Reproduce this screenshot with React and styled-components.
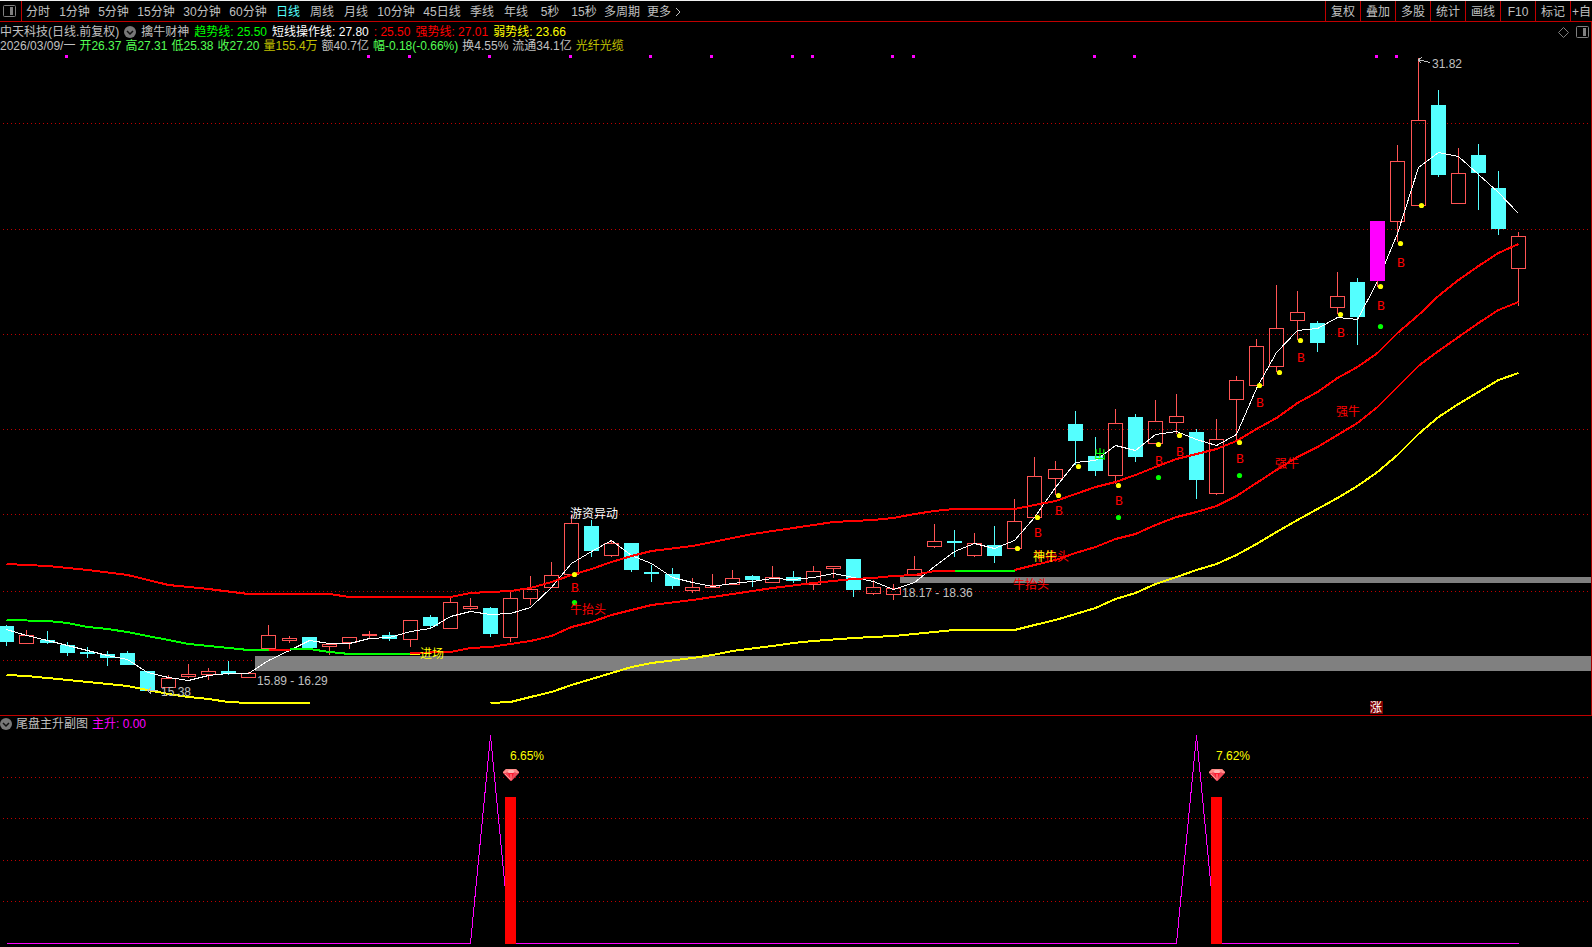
import React from 'react';
import styled, { createGlobalStyle } from 'styled-components';

const GlobalStyle = createGlobalStyle`
  body {
    margin: 0;
    background: #000;
    color: #c0c0c0;
    font: 12px/14px "Liberation Sans", "Noto Sans CJK SC", sans-serif;
  }
`

const periods = [
  '分时', '1分钟', '5分钟', '15分钟', '30分钟', '60分钟', '日线', '周线', '月线', '10分钟',
  '45日线', '季线', '年线', '5秒', '15秒', '多周期',
];

const tools = ['复权', '叠加', '多股', '统计', '画线', 'F10', '标记'];

// type, body top, body bottom, high, low
const candles = [
  ['d', 626, 642, 625, 646], ['u', 635, 644, 630, 644], ['d', 640, 643, 631, 644],
  ['d', 645, 653, 642, 656], ['d', 652, 654, 647, 658], ['d', 654, 658, 651, 666],
  ['d', 653, 665, 651, 665], ['d', 671, 691, 671, 691], ['u', 678, 688, 675, 688],
  ['u', 674, 677, 664, 678], ['u', 671, 675, 668, 680], ['d', 671, 674, 661, 675],
  ['u', 673, 678, 672, 678], ['u', 635, 649, 625, 649], ['u', 638, 641, 636, 643],
  ['d', 637, 648, 637, 648], ['u', 644, 647, 643, 655], ['u', 637, 643, 637, 649],
  ['u', 634, 636, 631, 638], ['d', 635, 639, 632, 641], ['u', 620, 640, 620, 647],
  ['d', 617, 626, 615, 628], ['u', 602, 629, 597, 629], ['u', 606, 609, 598, 610],
  ['d', 608, 634, 607, 637], ['u', 598, 638, 592, 642], ['u', 589, 599, 576, 605],
  ['u', 575, 588, 562, 588], ['u', 523, 575, 515, 575], ['d', 526, 551, 520, 557],
  ['u', 543, 556, 540, 557], ['d', 543, 570, 543, 572], ['d', 572, 574, 565, 582],
  ['d', 574, 586, 568, 589], ['u', 587, 591, 578, 593], ['u', 585, 588, 574, 588],
  ['u', 578, 585, 570, 585], ['d', 576, 580, 575, 587], ['u', 577, 583, 566, 583],
  ['d', 577, 581, 571, 583], ['u', 571, 585, 566, 590], ['u', 566, 569, 566, 578],
  ['d', 559, 590, 559, 597], ['u', 587, 594, 580, 595], ['u', 588, 595, 584, 600],
  ['u', 569, 576, 556, 576], ['u', 541, 547, 524, 548], ['d', 541, 543, 530, 557],
  ['u', 543, 556, 533, 557], ['d', 545, 556, 526, 563], ['u', 521, 549, 499, 549],
  ['u', 476, 518, 457, 518], ['u', 469, 479, 461, 495], ['d', 424, 441, 411, 465],
  ['d', 456, 471, 437, 476], ['u', 423, 476, 409, 484], ['d', 417, 457, 414, 462],
  ['u', 421, 444, 400, 444], ['u', 416, 423, 394, 434], ['d', 432, 480, 429, 499],
  ['u', 439, 494, 419, 495], ['u', 380, 400, 376, 441], ['u', 346, 386, 339, 386],
  ['u', 328, 367, 285, 372], ['u', 312, 321, 291, 340], ['d', 323, 343, 321, 352],
  ['u', 296, 308, 272, 314], ['d', 282, 317, 278, 345], ['m', 221, 281, 221, 287],
  ['u', 161, 222, 145, 242], ['u', 120, 206, 58, 206], ['d', 105, 175, 90, 177],
  ['u', 173, 204, 148, 204], ['d', 155, 173, 144, 210], ['d', 188, 229, 171, 235],
  ['u', 236, 269, 232, 306],
];

const shortLine = [
  629, 635, 640, 645, 650, 655, 659, 672, 677, 680, 675, 673, 673, 660, 650, 640, 643, 643, 638, 637,
  631, 628, 616, 611, 614, 613, 607, 587, 563, 551, 540, 555, 563, 577, 582, 586, 583, 581, 578, 579,
  577, 573, 577, 581, 589, 582, 566, 551, 543, 548, 540, 517, 487, 462, 460, 445, 450, 434, 431, 439,
  445, 434, 388, 352, 330, 328, 317, 319, 281, 233, 167, 152, 156, 174, 192, 213,
].map((y, i) => [i, y]);

const strongLine = [
  [0, 564], [2, 566], [4, 570], [6, 575], [8, 585], [10, 589], [12, 594], [16, 594], [17, 597], [22, 597],
  [23, 593], [24, 592], [25, 591], [26, 588], [27, 582], [28, 575], [29, 569], [30, 562], [31, 556],
  [32, 551], [34, 546], [35, 542], [37, 534], [40, 525], [41, 522], [43, 520], [44, 518], [45, 514],
  [46, 511], [47, 509], [50, 509], [51, 505], [52, 501], [53, 494], [54, 487], [55, 482], [56, 475],
  [57, 467], [58, 459], [59, 454], [60, 449], [61, 441], [62, 429], [63, 418], [64, 403], [65, 392],
  [66, 378], [67, 367], [68, 353], [69, 333], [70, 315], [71, 296], [72, 280], [73, 266], [74, 253], [75, 244],
];

const trendLine = [
  { color: '#00ff00', points: [[0, 620], [2, 621], [3, 623], [4, 627], [5, 629], [6, 632], [7, 636], [8, 640], [9, 644], [10, 646], [11, 648], [12, 650], [13, 650]] },
  { color: '#ff0000', points: [[13, 650], [14, 650]] },
  { color: '#00ff00', points: [[14, 649], [15, 649], [16, 652], [17, 654], [20, 654]] },
  { color: '#ff0000', points: [[20, 653], [22, 652], [23, 648], [24, 647], [25, 644], [26, 641], [27, 636], [28, 627], [29, 622], [30, 615], [32, 605], [34, 600], [36, 594], [38, 588], [40, 583], [42, 579], [43, 578], [44, 576], [45, 575], [46, 571], [47, 571]] },
  { color: '#00ff00', points: [[47, 571], [50, 571]] },
  { color: '#ff0000', points: [[50, 570], [51, 565], [52, 560], [53, 553], [54, 547], [55, 539], [56, 534], [57, 525], [58, 517], [59, 512], [60, 506], [61, 496], [62, 483], [63, 470], [64, 457], [65, 447], [66, 435], [67, 423], [68, 407], [69, 387], [70, 366], [71, 351], [72, 337], [73, 323], [74, 310], [75, 302]] },
];

const weakLine = [
  { points: [[0, 675], [1, 676], [2, 678], [4, 682], [6, 686], [7, 690], [8, 694], [9, 697], [10, 699], [11, 702], [12, 703], [15, 703]] },
  { points: [[24, 703], [25, 702], [26, 697], [27, 692], [28, 685], [29, 679], [30, 673], [31, 667], [32, 663], [34, 658], [35, 655], [36, 651], [38, 646], [39, 643], [40, 641], [42, 638], [44, 636], [46, 632], [47, 630], [50, 630], [51, 625], [52, 620], [53, 614], [54, 608], [55, 599], [56, 593], [57, 584], [58, 577], [59, 570], [60, 564], [61, 555], [62, 544], [63, 532], [64, 520], [65, 509], [66, 498], [67, 486], [68, 472], [69, 455], [70, 434], [71, 417], [72, 404], [73, 392], [74, 380], [75, 373]] },
];

const topMarks = [3, 18, 20, 24, 28, 32, 35, 39, 40, 44, 45, 54, 56, 68, 69];

// candle index, yellow dot, B letter, green dot
const signals = [
  [28, 574, 588, 602], [50, 548], [51, 517, 533], [52, 495, 511], [53, 466], [55, 485, 501, 517],
  [57, 444, 461, 477], [58, 435, 452], [61, 442, 459, 475], [62, 385, 403], [63, 372], [64, 340, 358],
  [66, 314, 333], [68, 286, 306, 326], [69, 243, 263], [70, 205],
];

const labels = [
  [570, 518, '#ffffff', '游资异动'],
  [570, 614, '#ff0000', '牛抬头'],
  [420, 658, '#ffff00', '进场'],
  [1033, 561, '#ff0000', '牛抬头'],
  [1033, 561, '#ffff00', '神牛'],
  [1013, 589, '#ff0000', '牛抬头'],
  [1094, 459, '#00ff00', '出'],
  [1336, 416, '#ff0000', '强牛'],
  [1275, 468, '#ff0000', '强牛'],
  [161, 696, '#c0c0c0', '15.38'],
  [257, 685, '#c0c0c0', '15.89 - 16.29'],
  [902, 597, '#c0c0c0', '18.17 - 18.36'],
  [1432, 68, '#c0c0c0', '31.82'],
];

const surges = [
  { index: 24, value: '6.65%' },
  { index: 59, value: '7.62%' },
];

const xAt = (i) => Math.floor(6.82 + i * 20.16);
const toPoints = (list) => list.map(([i, y]) => `${xAt(i) + 0.5},${y + 0.5}`).join(' ');
// 2px strokes sit on whole pixels
const toThickPoints = (list) => list.map(([i, y]) => `${xAt(i) + 0.5},${y}`).join(' ');
const slotWidth = (label) => {
  if (label === '多周期') return 42;
  if (label.length < 3 || label === '15秒') return 34;
  return label === '1分钟' || label === '5分钟' ? 39 : 46;
};

function Candle({ index, data }) {
  const [type, top, bottom, high, low] = data;
  const x = xAt(index);

  if (type === 'u') {
    return (
      <g fill="none" stroke="#ff5454">
        <path d={`M${x + 0.5} ${high}V${top}M${x + 0.5} ${bottom}V${low}`} />
        <rect x={x - 6.5} y={top + 0.5} width="14" height={Math.max(bottom - top - 1, 1)} />
      </g>
    );
  }
  return (
    <g>
      <rect x={x} y={high} width="1" height={low - high} fill={type === 'm' ? '#ff5454' : '#54ffff'} />
      <rect x={x - 7} y={top} width="15" height={bottom - top} fill={type === 'm' ? '#ff00ff' : '#54ffff'} />
    </g>
  );
}

function Grid({ rows }) {
  return rows.map((y) => (
    <line key={y} x1="3" x2="1588" y1={y + 0.5} y2={y + 0.5} stroke="#c00000" strokeDasharray="1 3" />
  ));
}

function Diamond({ x, y }) {
  return (
    <g transform={`translate(${x} ${y})`}>
      <path d="M3 0H13L16 3V4L8.5 12H7.5L0 4V3Z" fill="#f04858" />
      <path d="M3 0H13L16 3V4H13L11 2H5L3 4H0V3Z" fill="#ff8c88" />
      <path d="M4 3L6 1H10L12 3L10 4H6Z" fill="#ffb8b4" />
      <path d="M5 4H11L8 11Z" fill="#ff1830" />
      <path d="M8 5V11M2 5L7 10" stroke="#ffa09c" fill="none" />
    </g>
  );
}

function PanelIcon() {
  return (
    <svg width="13" height="12" viewBox="0 0 13 12" aria-hidden="true">
      <rect x="0.5" y="0.5" width="12" height="11" rx="1" fill="none" stroke="#808080" />
      <rect x="7" y="2" width="3" height="8" fill="#808080" />
    </svg>
  );
}

function DropIcon() {
  return (
    <svg width="12" height="12" viewBox="0 0 12 12" aria-hidden="true">
      <circle cx="6" cy="6" r="6" fill="#787878" />
      <path d="M3 5L6 8L9 5" fill="none" stroke="#101010" strokeWidth="1.5" />
    </svg>
  );
}

function MainChart() {
  return (
    <Chart viewBox="0 52 1592 663" role="img" aria-label="中天科技 日线">
      <g shapeRendering="crispEdges">
        <Grid rows={[123, 229, 334, 429, 514, 591, 660]} />
        <rect x="255" y="656" width="1337" height="15" fill="#808080" />
        <rect x="900" y="577" width="692" height="6" fill="#808080" />
        {topMarks.map((i) => (
          <rect key={i} x={xAt(i) - 2} y="55" width="3" height="3" fill="#ff00ff" />
        ))}
        {candles.map((data, i) => data[0] !== 'm' && <Candle key={i} index={i} data={data} />)}
        <polyline points={toPoints(shortLine)} fill="none" stroke="#ffffff" />
        <Candle index={68} data={candles[68]} />
        <Curve points={toThickPoints(strongLine)} stroke="#ff0000" />
        {weakLine.map(({ points }, i) => (
          <Curve key={i} points={toThickPoints(points)} stroke="#ffff00" />
        ))}
        {trendLine.map(({ color, points }, i) => (
          <Curve key={i} points={toThickPoints(points)} stroke={color} />
        ))}
        <path d="M410 654.5H420" stroke="#ffff00" />
        <path d="M158 690.5H147M151 687.5L147.5 690.5L151 693.5" fill="none" stroke="#c0c0c0" />
        <path d="M1430 62.5L1418.5 59.5M1422 57.5L1418.5 59.5L1420.5 63" fill="none" stroke="#c0c0c0" />
      </g>
      {signals.map(([i, dot, letter, green]) => (
        <g key={i}>
          <circle cx={xAt(i) + 3.5} cy={dot + 0.5} r="2.6" fill="#ffff00" />
          {letter && <Letter x={xAt(i) + 4} y={letter + 4}>B</Letter>}
          {green && <circle cx={xAt(i) + 3.5} cy={green + 0.5} r="2.6" fill="#00ff00" />}
        </g>
      ))}
      {labels.map(([x, y, color, text]) => (
        <Label key={`${x}-${y}-${color}`} x={x} y={y} fill={color}>{text}</Label>
      ))}
      <rect x="1370" y="701" width="13" height="13" fill="#800000" />
      <Label x="1370" y="712" fill="#ffffff">涨</Label>
    </Chart>
  );
}

function SubChart() {
  const line = [[0, 943]];
  surges.forEach(({ index }) => line.push([index - 1, 943], [index, 735], [index + 1, 943]));
  line.push([75, 943]);

  return (
    <Chart viewBox="0 732 1592 215" role="img" aria-label="尾盘主升副图">
      <g shapeRendering="crispEdges">
        <Grid rows={[777, 818, 860, 901]} />
        <polyline points={toPoints(line)} fill="none" stroke="#ff00ff" />
        {surges.map(({ index }) => (
          <rect key={index} x={xAt(index + 1) - 5} y="797" width="11" height="147" fill="#ff0000" />
        ))}
      </g>
      {surges.map(({ index, value }) => (
        <g key={index}>
          <Diamond x={xAt(index + 1) - 7} y={769} />
          <Label x={xAt(index + 1)} y="760" fill="#ffff00">{value}</Label>
        </g>
      ))}
    </Chart>
  );
}

export default function App() {
  const [period, setPeriod] = React.useState('日线');

  return (
    <Page>
      <GlobalStyle />
      <Toolbar>
        <PanelBtn aria-label="侧栏"><PanelIcon /></PanelBtn>
        <Periods>
          {periods.map((label) => (
            <PeriodBtn
              key={label}
              $width={slotWidth(label)}
              $active={label === period}
              onClick={() => setPeriod(label)}
            >
              {label}
            </PeriodBtn>
          ))}
          <PeriodBtn $width={42}>
            更多
            <svg width="6" height="10" viewBox="0 0 6 10" aria-hidden="true">
              <path d="M1 1L5 5L1 9" fill="none" stroke="#c0c0c0" />
            </svg>
          </PeriodBtn>
        </Periods>
        {tools.map((label) => <ToolBtn key={label}>{label}</ToolBtn>)}
        <ToolBtn $last>+自</ToolBtn>
      </Toolbar>

      <MainPanel>
        <InfoBar>
          <div>
            <InfoRow $gap={5}>
              <Item>中天科技(日线.前复权)</Item>
              <IconBtn aria-label="指标菜单"><DropIcon /></IconBtn>
              <Item>擒牛财神</Item>
              <Item $color="#00ff00">趋势线: 25.50</Item>
              <Item $color="#ffffff">短线操作线: 27.80</Item>
              <Item $color="#ff0000">: 25.50</Item>
              <Item $color="#ff0000">强势线: 27.01</Item>
              <Item $color="#ffff00">弱势线: 23.66</Item>
            </InfoRow>
            <InfoRow $gap={4}>
              <Item>2026/03/09/一</Item>
              <Item $color="#54ff54">开26.37</Item>
              <Item $color="#54ff54">高27.31</Item>
              <Item $color="#54ff54">低25.38</Item>
              <Item $color="#54ff54">收27.20</Item>
              <Item $color="#c0c000">量155.4万</Item>
              <Item>额40.7亿</Item>
              <Item $color="#54ff54">幅-0.18(-0.66%)</Item>
              <Item>换4.55%</Item>
              <Item>流通34.1亿</Item>
              <Item $color="#c0c000">光纤光缆</Item>
            </InfoRow>
          </div>
          <Corner>
            <IconBtn aria-label="标记点">
              <svg width="11" height="11" viewBox="0 0 11 11" aria-hidden="true">
                <path d="M5.5 0.5L10.5 5.5L5.5 10.5L0.5 5.5Z" fill="none" stroke="#808080" />
              </svg>
            </IconBtn>
            <IconBtn aria-label="面板"><PanelIcon /></IconBtn>
          </Corner>
        </InfoBar>
        <MainChart />
      </MainPanel>

      <SubHeader>
        <IconBtn aria-label="副图菜单"><DropIcon /></IconBtn>
        <Item>尾盘主升副图</Item>
        <Item $color="#ff00ff">主升: 0.00</Item>
      </SubHeader>
      <SubChart />
    </Page>
  );
}

const Page = styled.main`
  overflow: hidden;
  border-top: 1px solid #f0f0f0;
`

const Toolbar = styled.nav`
  display: flex;
  height: 20px;
  border-bottom: 1px solid #c00000;
`

const Button = styled.button`
  padding: 0;
  border: 0;
  background: none;
  color: inherit;
  font: inherit;
  white-space: nowrap;
  cursor: pointer;
`

const IconBtn = styled(Button)`
  display: flex;
  align-items: center;
`

const PanelBtn = styled(IconBtn)`
  width: 22px;
  padding-left: 3px;
  border-right: 1px solid #c00000;
  box-sizing: border-box;
`

const Periods = styled.div`
  display: flex;
  flex: 1;
  min-width: 0;
  overflow: hidden;
`

const PeriodBtn = styled(Button)`
  display: flex;
  flex: none;
  align-items: center;
  justify-content: center;
  gap: 4px;
  width: ${({ $width }) => $width}px;
  padding: 2px 2px 0 0;
  box-sizing: border-box;
  color: ${({ $active }) => ($active ? '#54ffff' : '#c0c0c0')};
`

const ToolBtn = styled(Button)`
  flex: none;
  width: ${({ $last }) => ($last ? 22 : 35)}px;
  padding-top: 2px;
  border-left: 1px solid #c00000;
  overflow: hidden;
`

const MainPanel = styled.section`
  position: relative;
  border-bottom: 1px solid #c00000;

  &::after {
    content: '';
    position: absolute;
    inset: 0 0 0 auto;
    width: 1px;
    background: #a80000;
  }
`

const InfoBar = styled.div`
  display: flex;
  justify-content: space-between;
  height: 27px;
  padding-top: 3px;
`

const InfoRow = styled.div`
  display: flex;
  align-items: center;
  gap: ${({ $gap }) => $gap}px;
  height: 14px;
  white-space: nowrap;
`

const Item = styled.span`
  color: ${({ $color }) => $color || '#c0c0c0'};
`

const Corner = styled.div`
  display: flex;
  align-items: center;
  gap: 7px;
  height: 14px;
  padding-right: 3px;
`

const SubHeader = styled.header`
  display: flex;
  align-items: center;
  gap: 4px;
  height: 16px;
`

const Chart = styled.svg`
  display: block;
  width: 100%;
  height: auto;
`

const Curve = styled.polyline`
  fill: none;
  stroke-width: 2px;
`

const Label = styled.text`
  font-size: 12px;
`

const Letter = styled.text`
  fill: #ff0000;
  font-family: "Liberation Mono", monospace;
  font-size: 13px;
  text-anchor: middle;
`
